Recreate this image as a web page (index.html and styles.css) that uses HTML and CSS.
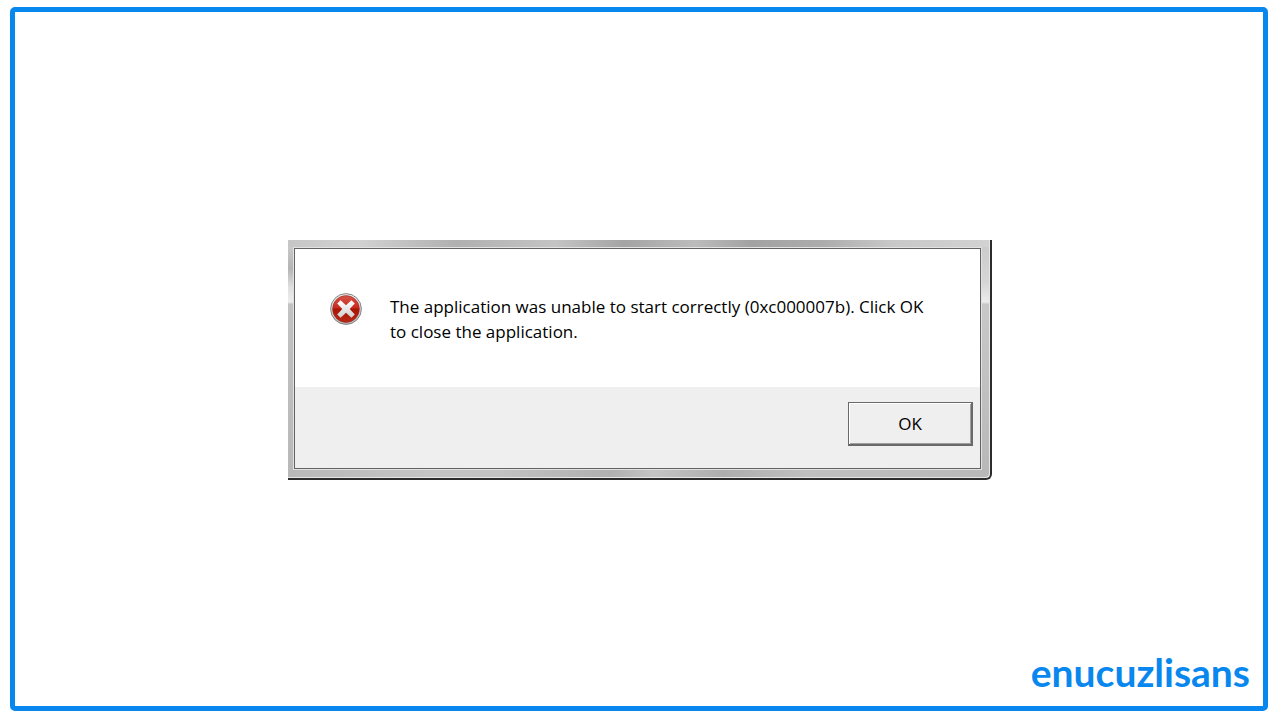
FILE: index.html
```html
<!DOCTYPE html>
<html lang="en">
<head>
    <meta charset="UTF-8">
    <meta name="viewport" content="width=device-width, initial-scale=1.0">
    <title>0xc000007b - enucuzlisans</title>
    <link rel="stylesheet" href="styles.css">
</head>
<body>
    <main class="frame">
        <section class="window" role="alertdialog" aria-labelledby="message">
            <div class="client">
                <div class="content">
                    <svg class="error-icon" viewBox="0 0 32 32" aria-hidden="true">
                        <defs>
                            <linearGradient id="rim" x1="0" y1="0" x2="0" y2="1">
                                <stop offset="0" stop-color="#eeeeee"/>
                                <stop offset="1" stop-color="#b8b8b8"/>
                            </linearGradient>
                            <linearGradient id="red" x1="0" y1="0" x2="0" y2="1">
                                <stop offset="0" stop-color="#d65348"/>
                                <stop offset="0.45" stop-color="#c92b20"/>
                                <stop offset="0.5" stop-color="#a91505"/>
                                <stop offset="1" stop-color="#b82a18"/>
                            </linearGradient>
                            <linearGradient id="cross" x1="0" y1="0" x2="0" y2="1">
                                <stop offset="0" stop-color="#ffffff"/>
                                <stop offset="1" stop-color="#cfcfcf"/>
                            </linearGradient>
                        </defs>
                        <circle cx="16" cy="16" r="15.4" fill="url(#rim)" stroke="#858585"/>
                        <circle cx="16" cy="16" r="13.4" fill="url(#red)" stroke="#9b2b22" stroke-width="0.6"/>
                        <path d="M10.6 7.2 16 12.3 21.4 7.2 24.8 10.6 19.7 16 24.8 21.4 21.4 24.8 16 19.7 10.6 24.8 7.2 21.4 12.3 16 7.2 10.6Z" fill="url(#cross)"/>
                    </svg>
                    <p class="message" id="message">The application was unable to start correctly (0xc000007b). Click OK to close the application.</p>
                </div>
                <div class="actions">
                    <button class="ok" type="button">OK</button>
                </div>
            </div>
        </section>
        <div class="logo">enucuzlisans</div>
    </main>
</body>
</html>
```
FILE: styles.css
```css
* {
    box-sizing: border-box;
}
body {
    margin: 0;
    min-height: 100vh;
    padding: 7px 12px 9px 10px;
    display: flex;
    background-color: #fff;
    font-family: "Open Sans", "Noto Sans", sans-serif;
}
.frame {
    flex: 1;
    display: grid;
    grid-template-rows: 1fr auto 1fr;
    justify-items: center;
    padding: 2px 0 0 2px;
    border: 5px solid #0887ee;
    border-radius: 5px;
}
.window {
    grid-row: 2;
    width: 704px;
    max-width: 100%;
    padding: 7px 8px 8px 5px;
    border-right: 2px solid #2c2c2c;
    border-bottom: 2px solid #2c2c2c;
    border-bottom-right-radius: 6px;
    box-shadow: inset -1px -1px 0 #e6e6e6;
    background:
        linear-gradient(90deg, #c6c6c6, #d2d2d2 10%, #b0b0b0 24%, #c4c4c4 38%, #a4a4a4 48%, #bcbcbc 58%, #a2a2a2 66%, #acacac 76%, #c8c8c8 86%, #d2d2d2) top / 100% 7px no-repeat,
        linear-gradient(90deg, #b8b8b8, #c4c4c4 20%, #c2c2c2 30%, #b0b0b0 46%, #c4c4c4 52%, #aeaeae 62%, #c0c0c0 74%, #b8b8b8) bottom / 100% 8px no-repeat,
        linear-gradient(#d0d0d0, #b4b4b4 12%, #e0e0e0 20%, #ededed 26%, #c2c2c2 27%, #b8b8b8) left / 50% 100% no-repeat,
        linear-gradient(#cacaca, #d6d6d6 18%, #ececec 26%, #c8c8c8 27%, #b8b8b8) right / 50% 100% no-repeat;
}
.client {
    border: 1px solid #626262;
    outline: 1px solid #e2e2e2;
    margin: 1px;
    background-color: #efefef;
}
.content {
    display: flex;
    align-items: flex-start;
    gap: 28px;
    min-height: 138px;
    padding: 44px 40px 40px 35px;
    background-color: #fff;
}
.error-icon {
    flex: none;
    width: 32px;
    height: 32px;
}
.message {
    margin: 1px 0 0;
    font-size: 17px;
    line-height: 25px;
    color: #000;
}
.actions {
    display: flex;
    justify-content: flex-end;
    padding: 15px 7px 22px;
}
.ok {
    width: 125px;
    height: 44px;
    padding: 0;
    border: 1px solid #696969;
    border-width: 1px 2px 2px 1px;
    border-radius: 0;
    box-shadow: inset 1px 1px 0 #fff, inset -1px -1px 0 #a0a0a0;
    background-color: #efefef;
    font-family: inherit;
    font-size: 17px;
    color: #000;
}
.logo {
    grid-row: 3;
    align-self: end;
    justify-self: end;
    margin: 0 13px 10px 0;
    font-family: Lato, sans-serif;
    font-size: 39px;
    font-weight: 700;
    line-height: 48px;
    color: #0887ee;
}
```
